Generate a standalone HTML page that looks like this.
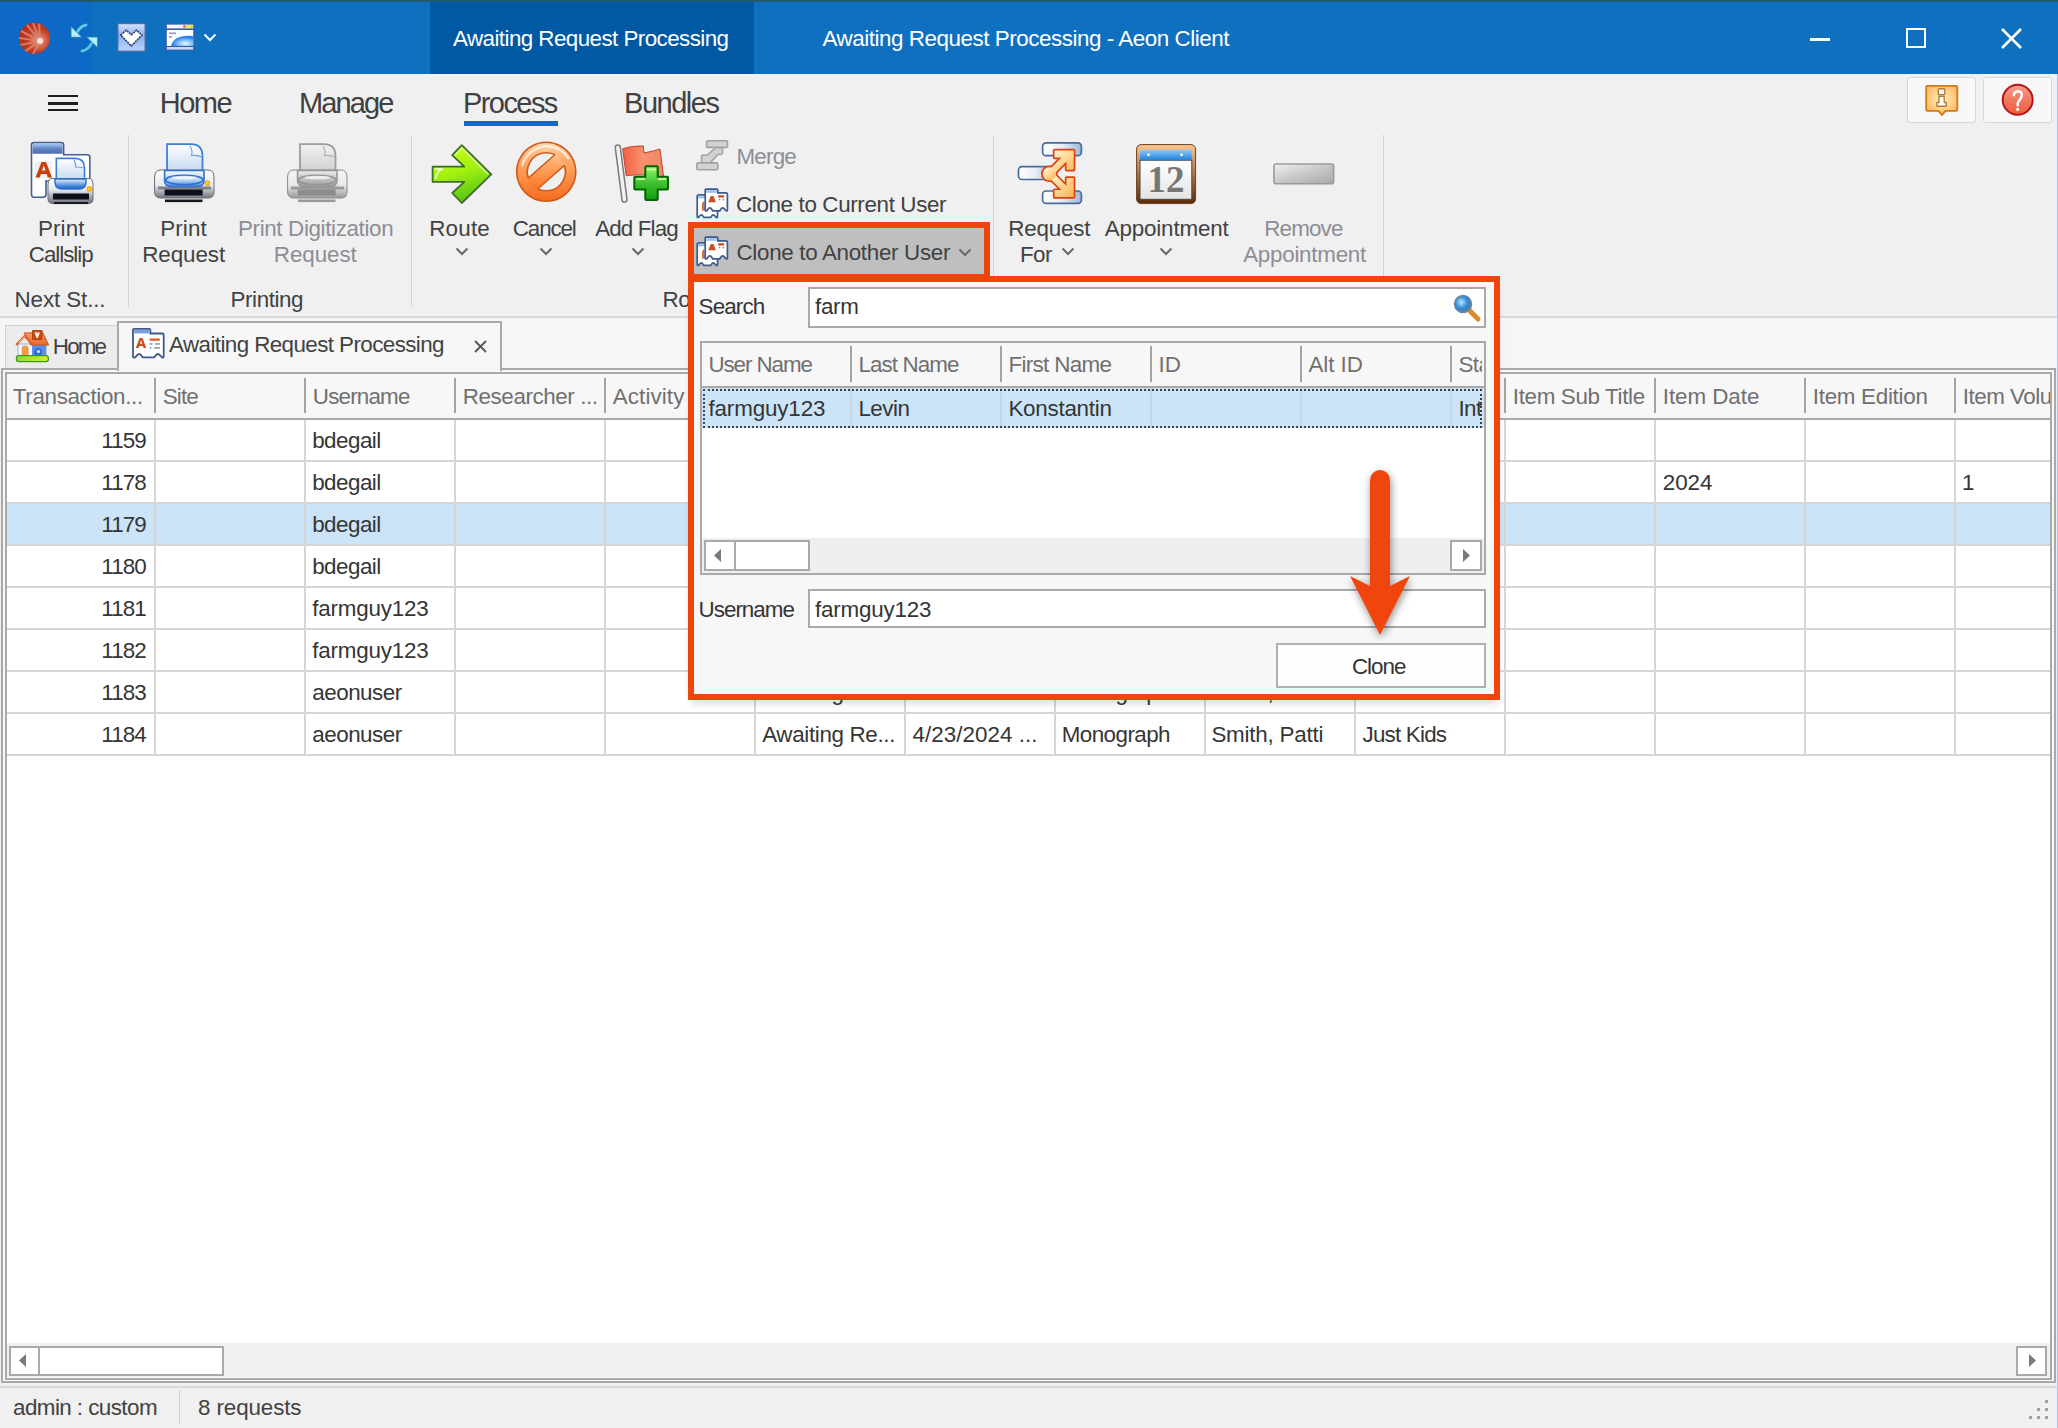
<!DOCTYPE html><html><head><meta charset="utf-8"><title>Aeon Client</title><style>*{margin:0;padding:0}
html,body{width:2058px;height:1428px;overflow:hidden;background:#f0f0f0;font-family:"Liberation Sans",sans-serif}
.a{position:absolute}
.t{position:absolute;white-space:nowrap;line-height:1}
svg{overflow:visible}
</style></head><body><div class="a" style="left:0px;top:0px;width:2058px;height:74px;background:#1070c0"></div>
<div class="a" style="left:0px;top:0px;width:92px;height:74px;background:#0e69c6"></div>
<div class="a" style="left:0px;top:0px;width:2058px;height:2px;background:#1f5a6e"></div>
<div class="a" style="left:430px;top:2px;width:324px;height:72px;background:#0259a3"></div>
<div class="t" style="left:453.0px;top:28.34px;font-size:22.4px;color:#ffffff;letter-spacing:-0.568px;">Awaiting Request Processing</div>
<div class="t" style="left:822.5px;top:28.34px;font-size:22.4px;color:#ffffff;letter-spacing:-0.455px;">Awaiting Request Processing - Aeon Client</div>
<div class="a" style="left:1810px;top:37.5px;width:20px;height:3px;background:#fff"></div>
<div class="a" style="left:1906px;top:28px;width:20px;height:20px;border:2.5px solid #fff;box-sizing:border-box"></div>
<svg class="a" style="left:2001px;top:28px" width="21" height="21" viewBox="0 0 21 21"><path d="M1 1L20 20M20 1L1 20" stroke="#fff" stroke-width="2.6"/></svg>
<svg class="a" style="left:18px;top:22px" width="33" height="33" viewBox="0 0 33 33"><defs><radialGradient id="rs" cx="0.66" cy="0.58" r="0.75"><stop offset="0" stop-color="#fff0ea"/><stop offset="0.18" stop-color="#e07a62"/><stop offset="0.5" stop-color="#bf3a1e"/><stop offset="1" stop-color="#b02e14"/></radialGradient>
<clipPath id="rsc"><circle cx="16.5" cy="16.3" r="15.5"/></clipPath></defs>
<circle cx="16.5" cy="16.3" r="15.5" fill="url(#rs)"/>
<g clip-path="url(#rsc)" stroke="#d98472" stroke-width="2.2" opacity="0.85" fill="none">
<path d="M22 19L9 3M22 19L15 1M22 19L21 0M22 19L3 9M22 19L1 16M22 19L2 23M22 19L6 30M22 19L14 34"/></g>
<circle cx="22" cy="19" r="3" fill="#fbeae4" opacity="0.9"/></svg>
<svg class="a" style="left:69px;top:24px" width="31" height="29" viewBox="0 0 31 29"><g fill="none" stroke-linecap="round"><path d="M8 8.5Q11.5 2 17 1" stroke="#0f7fae" stroke-width="4.2"/><path d="M8 8.5Q11.5 2 17 1" stroke="#6ccaf6" stroke-width="2.6"/>
<path d="M23 18.5Q19.5 26 13 27" stroke="#0f7fae" stroke-width="4.2"/><path d="M23 18.5Q19.5 26 13 27" stroke="#5cc2f2" stroke-width="2.6"/></g>
<path d="M2 13.3V2.4L12.9 13.3Z" fill="#b8ecff" stroke="#0f7fae" stroke-width="0.8"/>
<path d="M28.6 13H17.4L28.6 23.7Z" fill="#b8ecff" stroke="#0f7fae" stroke-width="0.8"/></svg>
<svg class="a" style="left:117px;top:23px" width="29" height="29" viewBox="0 0 29 29"><defs><linearGradient id="hb" x1="0" y1="0" x2="0" y2="1"><stop offset="0" stop-color="#d4e4ff"/><stop offset="0.45" stop-color="#8cb0f2"/><stop offset="1" stop-color="#bcd6fe"/></linearGradient></defs>
<rect x="0.8" y="0.5" width="27.4" height="27.8" fill="url(#hb)" stroke="#56689c" stroke-width="1.4"/>
<path d="M3.6 12.1L9.3 7.2L14.3 11.8L19.5 7.2L25 12.1L14.3 23Z" fill="#fff" stroke="#2a3f7a" stroke-width="1.6" stroke-dasharray="2 0.8" stroke-linejoin="round"/></svg>
<svg class="a" style="left:165px;top:23px" width="30" height="28" viewBox="0 0 30 28"><defs><radialGradient id="gl" cx="0.65" cy="0.75" r="0.6"><stop offset="0" stop-color="#e8f4ff"/><stop offset="0.6" stop-color="#7ab8f8"/><stop offset="1" stop-color="#2a80e8"/></radialGradient></defs>
<rect x="0.6" y="0.6" width="28.8" height="26.8" fill="#3a5aa0"/>
<rect x="1.8" y="1.6" width="26.4" height="3.8" fill="#f0f6ff"/>
<circle cx="19.5" cy="3.5" r="1.6" fill="#f07060"/><circle cx="23" cy="3.5" r="1.6" fill="#f0e020"/><circle cx="26.5" cy="3.5" r="1.6" fill="#c8e020"/>
<rect x="1.8" y="7" width="26.4" height="16" fill="#ffffff"/>
<rect x="4" y="9.5" width="7" height="1.6" fill="#8a9ac0"/><rect x="4" y="13" width="3" height="1.6" fill="#8a9ac0"/>
<path d="M6 23C8 15 16 11.5 28.2 13V23Z" fill="url(#gl)"/>
<rect x="1.8" y="24" width="26.4" height="2.6" fill="#c8d8fc"/></svg>
<svg class="a" style="left:203px;top:33px" width="14" height="9" viewBox="0 0 14 9"><path d="M1.5 1.5L7 7L12.5 1.5" fill="none" stroke="#fff" stroke-width="2"/></svg>
<div class="a" style="left:0px;top:74px;width:2058px;height:243px;background:#f0f0f0"></div>
<div class="a" style="left:48px;top:94.5px;width:30px;height:2.6px;background:#1e1e1e"></div>
<div class="a" style="left:48px;top:102px;width:30px;height:2.6px;background:#1e1e1e"></div>
<div class="a" style="left:48px;top:108.5px;width:30px;height:2.6px;background:#1e1e1e"></div>
<div class="t" style="left:159.7px;top:88.75px;font-size:29px;color:#404040;letter-spacing:-1.443px;">Home</div>
<div class="t" style="left:299.0px;top:88.75px;font-size:29px;color:#404040;letter-spacing:-1.876px;">Manage</div>
<div class="t" style="left:463.0px;top:88.75px;font-size:29px;color:#404040;letter-spacing:-1.573px;">Process</div>
<div class="t" style="left:624.0px;top:88.75px;font-size:29px;color:#404040;letter-spacing:-1.464px;">Bundles</div>
<div class="a" style="left:464px;top:121px;width:94px;height:5px;background:#1068c0"></div>
<div class="a" style="left:1907px;top:77px;width:69px;height:46px;background:#f8f8f8;border:1.5px solid #d8d8d8;box-sizing:border-box;border-radius:3px"></div>
<div class="a" style="left:1983px;top:77px;width:69px;height:46px;background:#f8f8f8;border:1.5px solid #d8d8d8;box-sizing:border-box;border-radius:3px"></div>
<svg class="a" style="left:1925px;top:84px" width="34" height="33" viewBox="0 0 34 33"><defs><radialGradient id="al" cx="0.5" cy="0.45" r="0.7"><stop offset="0" stop-color="#fff0c0"/><stop offset="0.5" stop-color="#ffd088"/><stop offset="1" stop-color="#f8b050"/></radialGradient></defs>
<path d="M2.2 1.8Q1.2 1.8 1.2 2.8V25.5Q1.2 26.8 2.5 26.8H13.5L17 31L20.5 26.8H31Q32.3 26.8 32.3 25.5V2.8Q32.3 1.8 31.3 1.8Z" fill="url(#al)" stroke="#cf7a12" stroke-width="1.8" stroke-linejoin="round"/>
<rect x="13.3" y="4.8" width="6.5" height="5.8" rx="0.8" fill="#fff" stroke="#b87838" stroke-width="1.4"/>
<path d="M14 12.2H19.2V18.5H21.3V22.3H12V18.5H14Z" fill="#fff" stroke="#b87838" stroke-width="1.4" stroke-linejoin="round"/></svg>
<svg class="a" style="left:2001px;top:84px" width="34" height="33" viewBox="0 0 34 33"><defs><linearGradient id="hp" x1="0" y1="0" x2="0" y2="1"><stop offset="0" stop-color="#f8a090"/><stop offset="0.5" stop-color="#f07860"/><stop offset="1" stop-color="#f05a38"/></linearGradient></defs>
<circle cx="16.7" cy="15.8" r="15" fill="url(#hp)" stroke="#b01818" stroke-width="2"/>
<path d="M12.8 11.3Q13.5 7.3 17 7.3Q21 7.5 20.8 11.3Q20.5 14.5 17.8 17Q16.5 18.5 16.7 21.5" fill="none" stroke="#fff" stroke-width="2.4" stroke-linecap="round"/><circle cx="16.7" cy="25.3" r="1.6" fill="#fff"/></svg>
<div class="a" style="left:127.5px;top:135px;width:1.5px;height:172px;background:#d3d3d3"></div>
<div class="a" style="left:410.5px;top:135px;width:1.5px;height:172px;background:#d3d3d3"></div>
<div class="a" style="left:992.5px;top:135px;width:1.5px;height:172px;background:#d3d3d3"></div>
<div class="a" style="left:1382.5px;top:135px;width:1.5px;height:172px;background:#d3d3d3"></div>
<div class="a" style="left:0px;top:316px;width:2058px;height:2px;background:#d8d8d8"></div>
<div class="t" style="left:14.5px;top:289.04px;font-size:22.4px;color:#424242;letter-spacing:-0.112px;">Next St...</div>
<div class="t" style="left:230.5px;top:289.04px;font-size:22.4px;color:#424242;letter-spacing:-0.408px;">Printing</div>
<div class="t" style="left:662.5px;top:289.04px;font-size:22.4px;color:#424242;letter-spacing:-0.500px;">Ro</div>
<div class="t" style="left:-338.73px;width:800px;text-align:center;top:218.04px;font-size:22.4px;color:#424242;letter-spacing:0.130px;">Print</div>
<div class="t" style="left:-339.32px;width:800px;text-align:center;top:243.54px;font-size:22.4px;color:#424242;letter-spacing:-1.043px;">Callslip</div>
<div class="t" style="left:-216.43px;width:800px;text-align:center;top:218.04px;font-size:22.4px;color:#424242;letter-spacing:0.130px;">Print</div>
<div class="t" style="left:-216.33px;width:800px;text-align:center;top:243.54px;font-size:22.4px;color:#424242;letter-spacing:-0.056px;">Request</div>
<div class="t" style="left:-84.38px;width:800px;text-align:center;top:218.04px;font-size:22.4px;color:#8d8d96;letter-spacing:-0.365px;">Print Digitization</div>
<div class="t" style="left:-84.73px;width:800px;text-align:center;top:243.54px;font-size:22.4px;color:#8d8d96;letter-spacing:-0.056px;">Request</div>
<div class="t" style="left:59.60px;width:800px;text-align:center;top:218.04px;font-size:22.4px;color:#424242;letter-spacing:0.204px;">Route</div>
<div class="t" style="left:144.24px;width:800px;text-align:center;top:218.04px;font-size:22.4px;color:#424242;letter-spacing:-1.127px;">Cancel</div>
<div class="t" style="left:236.57px;width:800px;text-align:center;top:218.04px;font-size:22.4px;color:#424242;letter-spacing:-0.865px;">Add Flag</div>
<div class="t" style="left:649.20px;width:800px;text-align:center;top:218.04px;font-size:22.4px;color:#424242;letter-spacing:-0.206px;">Request</div>
<div class="t" style="left:1019.9px;top:243.54px;font-size:22.4px;color:#424242;letter-spacing:-0.513px;">For</div>
<div class="t" style="left:766.62px;width:800px;text-align:center;top:218.04px;font-size:22.4px;color:#424242;letter-spacing:-0.165px;">Appointment</div>
<div class="t" style="left:903.38px;width:800px;text-align:center;top:218.04px;font-size:22.4px;color:#8d8d96;letter-spacing:-0.841px;">Remove</div>
<div class="t" style="left:904.57px;width:800px;text-align:center;top:243.54px;font-size:22.4px;color:#8d8d96;letter-spacing:-0.265px;">Appointment</div>
<svg class="a" style="left:455px;top:247px" width="14" height="9" viewBox="0 0 14 9"><path d="M1.5 1.5L7 7L12.5 1.5" fill="none" stroke="#6a6a6a" stroke-width="2"/></svg>
<svg class="a" style="left:539px;top:247px" width="14" height="9" viewBox="0 0 14 9"><path d="M1.5 1.5L7 7L12.5 1.5" fill="none" stroke="#6a6a6a" stroke-width="2"/></svg>
<svg class="a" style="left:631px;top:247px" width="14" height="9" viewBox="0 0 14 9"><path d="M1.5 1.5L7 7L12.5 1.5" fill="none" stroke="#6a6a6a" stroke-width="2"/></svg>
<svg class="a" style="left:1061px;top:247px" width="14" height="9" viewBox="0 0 14 9"><path d="M1.5 1.5L7 7L12.5 1.5" fill="none" stroke="#6a6a6a" stroke-width="2"/></svg>
<svg class="a" style="left:1159px;top:247px" width="14" height="9" viewBox="0 0 14 9"><path d="M1.5 1.5L7 7L12.5 1.5" fill="none" stroke="#6a6a6a" stroke-width="2"/></svg>
<div class="t" style="left:736.4px;top:146.34px;font-size:22.4px;color:#8d8d96;letter-spacing:-0.775px;">Merge</div>
<div class="t" style="left:736.0px;top:194.04px;font-size:22.4px;color:#424242;letter-spacing:-0.361px;">Clone to Current User</div>
<svg class="a" style="left:30px;top:141px" width="64" height="64" viewBox="0 0 64 64"><defs><linearGradient id="tabg" x1="0" y1="0" x2="0" y2="1"><stop offset="0" stop-color="#a8c8f8"/><stop offset="0.5" stop-color="#5f86c0"/><stop offset="1" stop-color="#4a6ea8"/></linearGradient>
<linearGradient id="bodyg" x1="0" y1="0" x2="0" y2="1"><stop offset="0" stop-color="#ffffff"/><stop offset="0.45" stop-color="#e9ebee"/><stop offset="0.7" stop-color="#a9adb4"/><stop offset="1" stop-color="#6d7178"/></linearGradient>
<linearGradient id="papg" x1="0" y1="0" x2="0" y2="1"><stop offset="0" stop-color="#ffffff"/><stop offset="1" stop-color="#c8dcf4"/></linearGradient>
<linearGradient id="trayg" x1="0" y1="0" x2="0" y2="1"><stop offset="0" stop-color="#e8f2ff"/><stop offset="0.6" stop-color="#5a98e0"/><stop offset="1" stop-color="#1f5cc0"/></linearGradient></defs>
<path d="M1.5 4Q1.5 1.6 4 1.6H31Q33.6 1.6 33.6 4V13.8H57.5Q59.8 13.8 59.8 16V40H16V53Q16 56.3 13 56.3H4Q1.5 56.3 1.5 53Z" fill="#ffffff" stroke="#44618e" stroke-width="1.6"/>
<path d="M2.5 4Q2.5 2.6 4 2.6H31Q32.6 2.6 32.6 4V12.8H2.5Z" fill="url(#tabg)"/>
<rect x="5" y="20" width="17" height="17" fill="#eef0f3"/>
<path d="M5.5 36.5L11.5 21H16L22 36.5H17.8L16.6 33H10.9L9.7 36.5ZM12 29.6H15.5L13.8 24.4Z" fill="#c8400c"/>
<path d="M26.3 17.4H45Q54.5 17.4 54.5 27V38H26.3Z" fill="url(#papg)" stroke="#3d80d8" stroke-width="1.6"/>
<path d="M44 18.5Q46 23 45.5 26Q50 26 53.5 27" fill="none" stroke="#6aa0e0" stroke-width="1.2"/>
<path d="M18 44Q18 37.5 22 37.5H59Q63 37.5 63 44V58Q63 62.6 58 62.6H23Q18 62.6 18 58Z" fill="url(#bodyg)" stroke="#6a6e74" stroke-width="1"/>
<path d="M25 38H56Q57 47 50 48H31Q24 47 25 38Z" fill="url(#trayg)" stroke="#2f70d0" stroke-width="1.5"/>
<rect x="23" y="52.5" width="36" height="6" fill="#0d0f1a"/>
<rect x="24" y="61" width="34" height="2" fill="#14161e"/>
<circle cx="59.3" cy="48" r="2.4" fill="#ffd200" stroke="#f08020" stroke-width="0.8"/></svg>
<svg class="a" style="left:153px;top:143px" width="62" height="60" viewBox="0 0 62 60"><defs><linearGradient id="pba" x1="0" y1="0" x2="0" y2="1"><stop offset="0" stop-color="#ffffff"/><stop offset="0.55" stop-color="#e6e8eb"/><stop offset="1" stop-color="#73777e"/></linearGradient>
<linearGradient id="ppa" x1="0" y1="0" x2="0" y2="1"><stop offset="0" stop-color="#ffffff"/><stop offset="1" stop-color="#c4d8f2"/></linearGradient>
<linearGradient id="pta" x1="0" y1="0" x2="0" y2="1"><stop offset="0" stop-color="#f4f9ff"/><stop offset="0.6" stop-color="#b8d6f6"/><stop offset="1" stop-color="#4a88e0"/></linearGradient></defs>
<path d="M14 1.2H38Q49.5 1.2 49.5 13V29H14Z" fill="url(#ppa)" stroke="#3d80d8" stroke-width="1.8"/>
<path d="M37 3Q40 8 38.5 12.5Q45 12 48.5 14" fill="none" stroke="#3d80d8" stroke-width="1.2" opacity="0.7"/>
<path d="M1.6 34Q1.6 27 8 27H55Q61 27 61 34V49Q61 55 55 55H8Q1.6 55 1.6 49Z" fill="url(#pba)" stroke="#6a6e74" stroke-width="1"/>
<rect x="5" y="43.5" width="53" height="3" fill="#6a6e74" opacity="0.8"/>
<path d="M11.6 27.5H51V37.5Q51 43.5 44 43.5H19Q11.6 43.5 11.6 37.5Z" fill="url(#pta)" stroke="#2f70d0" stroke-width="1.6"/>
<ellipse cx="31.3" cy="37" rx="18.5" ry="4.6" fill="none" stroke="#2f70d0" stroke-width="1.8"/>
<ellipse cx="31.3" cy="34.5" rx="13" ry="1.8" fill="#ffffff" opacity="0.7"/>
<rect x="11.6" y="46.5" width="38" height="6" fill="#0d0f1a"/>
<rect x="12" y="56.5" width="37.5" height="2.6" fill="#14161e"/><circle cx="54.3" cy="40.2" r="2.4" fill="#ffd200" stroke="#f08020" stroke-width="0.8"/></svg>
<svg class="a" style="left:286px;top:143px" width="62" height="60" viewBox="0 0 62 60"><defs><linearGradient id="pbb" x1="0" y1="0" x2="0" y2="1"><stop offset="0" stop-color="#f4f4f4"/><stop offset="0.55" stop-color="#e6e8eb"/><stop offset="1" stop-color="#9a9a9a"/></linearGradient>
<linearGradient id="ppb" x1="0" y1="0" x2="0" y2="1"><stop offset="0" stop-color="#f2f2f2"/><stop offset="1" stop-color="#cfcfcf"/></linearGradient>
<linearGradient id="ptb" x1="0" y1="0" x2="0" y2="1"><stop offset="0" stop-color="#eeeeee"/><stop offset="0.6" stop-color="#bdbdbd"/><stop offset="1" stop-color="#9a9a9a"/></linearGradient></defs>
<path d="M14 1.2H38Q49.5 1.2 49.5 13V29H14Z" fill="url(#ppb)" stroke="#9c9c9c" stroke-width="1.8"/>
<path d="M37 3Q40 8 38.5 12.5Q45 12 48.5 14" fill="none" stroke="#9c9c9c" stroke-width="1.2" opacity="0.7"/>
<path d="M1.6 34Q1.6 27 8 27H55Q61 27 61 34V49Q61 55 55 55H8Q1.6 55 1.6 49Z" fill="url(#pbb)" stroke="#8a8a8a" stroke-width="1"/>
<rect x="5" y="43.5" width="53" height="3" fill="#8a8a8a" opacity="0.8"/>
<path d="M11.6 27.5H51V37.5Q51 43.5 44 43.5H19Q11.6 43.5 11.6 37.5Z" fill="url(#ptb)" stroke="#969696" stroke-width="1.6"/>
<ellipse cx="31.3" cy="37" rx="18.5" ry="4.6" fill="none" stroke="#969696" stroke-width="1.8"/>
<ellipse cx="31.3" cy="34.5" rx="13" ry="1.8" fill="#ffffff" opacity="0.7"/>
<rect x="11.6" y="46.5" width="38" height="6" fill="#8c8c8c"/>
<rect x="12" y="56.5" width="37.5" height="2.6" fill="#9a9a9a"/></svg>
<svg class="a" style="left:431px;top:144px" width="62" height="61" viewBox="0 0 62 61"><defs><linearGradient id="gr" x1="0" y1="0" x2="0.3" y2="1"><stop offset="0" stop-color="#c8ff10"/><stop offset="0.55" stop-color="#a2f010"/><stop offset="1" stop-color="#5cc816"/></linearGradient></defs>
<path d="M1.6 22.7H33.3L21.2 11.1L30.8 1.1L60.3 30.3L30.8 59L21.2 49L33.3 37.9H1.6Z" fill="url(#gr)" stroke="#3d6e2a" stroke-width="1.8" stroke-linejoin="round"/>
<path d="M3.5 25H12Q6 26 4.5 35" fill="none" stroke="#f4ffd8" stroke-width="1.5"/>
<path d="M24 11.2L30.8 4L57 30.3" fill="none" stroke="#eaffc0" stroke-width="1.4" opacity="0.8"/></svg>
<svg class="a" style="left:515px;top:142px" width="63" height="62" viewBox="0 0 63 62"><defs><linearGradient id="cg" x1="0" y1="0" x2="0" y2="1"><stop offset="0" stop-color="#ffd8b0"/><stop offset="0.3" stop-color="#ffac68"/><stop offset="1" stop-color="#f66a1c"/></linearGradient>
<clipPath id="cclip"><circle cx="31.3" cy="29.8" r="20"/></clipPath><clipPath id="cclip2"><circle cx="31.3" cy="29.8" r="19"/></clipPath></defs>
<path fill-rule="evenodd" d="M31.3 0.3A29.5 29.5 0 1 1 31.2 0.3ZM31.3 10.8A19 19 0 1 0 31.4 10.8Z" fill="url(#cg)" stroke="#cf5a1e" stroke-width="1.6"/>
<path d="M54.8 18.7L45.3 7.9L7.8 40.9L17.3 51.7Z" fill="url(#cg)" clip-path="url(#cclip)"/>
<g clip-path="url(#cclip2)" stroke="#cf5a1e" stroke-width="1.4"><path d="M45.3 7.9L7.8 40.9M54.8 18.7L17.3 51.7"/></g>
<path d="M7 24Q12 7 31 4Q47 5 54 17" fill="none" stroke="#ffffff" stroke-width="2.2" opacity="0.7"/></svg>
<svg class="a" style="left:612px;top:144px" width="58" height="60" viewBox="0 0 58 60"><defs><linearGradient id="fl" x1="0" y1="0" x2="1" y2="0"><stop offset="0" stop-color="#f06040"/><stop offset="0.5" stop-color="#f89070"/><stop offset="1" stop-color="#f08868"/></linearGradient>
<linearGradient id="pl" x1="0" y1="0" x2="0" y2="1"><stop offset="0" stop-color="#90ff70"/><stop offset="0.5" stop-color="#40c030"/><stop offset="1" stop-color="#10a010"/></linearGradient></defs>
<path d="M5.8 3.5L12.5 55.5" stroke="#7a7a7a" stroke-width="6.5" stroke-linecap="round"/>
<path d="M5.8 3.5L12.5 55.5" stroke="#f2f2f2" stroke-width="3.5" stroke-linecap="round"/>
<path d="M10.7 4.8C17 2.5 24 2 31.3 2L32 8.8C38 8 43 6.5 48 5L51.5 32.3C45 33 40 34 35.5 35L34.5 31C27 30.5 20 31 14.2 31.8Z" fill="url(#fl)" stroke="#c04030" stroke-width="1"/>
<path d="M33.3 23.3Q33.3 22.3 34.3 22.3H44.7Q45.7 22.3 45.7 23.3V32.8H55Q56 32.8 56 33.8V44.5Q56 45.5 55 45.5H45.7V55Q45.7 56 44.7 56H34.3Q33.3 56 33.3 55V45.5H23.3Q22.3 45.5 22.3 44.5V33.8Q22.3 32.8 23.3 32.8H33.3Z" fill="url(#pl)" stroke="#006400" stroke-width="2"/>
<path d="M35 25.5H44M24.5 35H33M46 35H54" stroke="#e8ffb0" stroke-width="1.5"/></svg>
<svg class="a" style="left:696px;top:140px" width="33" height="31" viewBox="0 0 33 31"><g fill="#d2d2d2" stroke="#a2a2a2" stroke-width="1.6" stroke-linejoin="round">
<path d="M5.5 23V16.5Q5.5 15 7 15H11.5L20 7.4H26.5V12.5Q26.5 14.5 24.5 14.5H22L14 22.9Z"/>
<rect x="10.5" y="0.8" width="21" height="6.6" rx="1.2"/><rect x="0.8" y="22.9" width="21" height="6.8" rx="1.2"/></g></svg>
<svg class="a" style="left:696px;top:188px" width="33" height="31" viewBox="0 0 33 31"><path d="M1.2 8.6Q1.2 6.8 3 6.8H21.5V28.6Q21.3 30 20 29.3L19.2 28.4Q17.3 25.2 15.4 28.4L14.8 29.3H7.8L7.2 28.4Q5.3 25.2 3.4 28.4L2.6 29.3Q1.2 30 1.2 28.5Z" fill="#ffffff" stroke="#3f5a8a" stroke-width="1.7"/>
<rect x="2.3" y="7.8" width="8" height="2.6" fill="#9cc0f4"/>
<path d="M6 15L8 13L9 22L6 23Z" fill="#d0622a" opacity="0.9"/>
<path d="M9.2 22.2V2Q9.2 1.1 10.1 1.1H20.8Q21.8 1.1 21.8 2V4.8H29.9Q31.4 4.8 31.4 6.3V22Q31.2 23.4 30 22.8L29.1 21.8Q26.6 17.8 24.4 21.8L23.8 22.8H16.7L16.1 21.8Q13.7 17.8 11.5 21.8L10.7 22.8Q9.2 23.4 9.2 22.2Z" fill="#ffffff" stroke="#3f5a8a" stroke-width="1.7"/>
<rect x="10.3" y="2.2" width="10.4" height="2.6" fill="#9cc0f4"/>
<path d="M12.3 14.2L14.8 8H17.4L19.9 14.2Z" fill="#c8501e"/>
<rect x="22" y="7.2" width="6.3" height="2.4" rx="1.2" fill="#d04a10"/>
<circle cx="23.6" cy="11.5" r="0.9" fill="#8a9ab0"/><circle cx="27.4" cy="11.5" r="0.9" fill="#8a9ab0"/></svg>
<svg class="a" style="left:1017px;top:142px" width="66" height="63" viewBox="0 0 66 63"><defs><linearGradient id="bar" x1="0" y1="0" x2="1" y2="0"><stop offset="0" stop-color="#ffffff"/><stop offset="0.5" stop-color="#e8eef6"/><stop offset="1" stop-color="#9ab8d8"/></linearGradient>
<linearGradient id="org" x1="0" y1="0" x2="1" y2="1"><stop offset="0" stop-color="#fffde0"/><stop offset="1" stop-color="#ffb050"/></linearGradient></defs>
<g fill="url(#bar)" stroke="#4a6a98" stroke-width="1.7"><rect x="25.6" y="0.9" width="38.8" height="12.8" rx="3.5"/><rect x="1.5" y="24.6" width="34" height="12.9" rx="3.5"/><rect x="25.6" y="49" width="38.8" height="12.4" rx="3.5"/></g>
<g id="rfa" fill="url(#org)" stroke="#e0400c" stroke-width="3.4" stroke-linejoin="round">
<path d="M37.5 8.5H56.7V27.7H49.5V19.5L36 33L31.5 28.5L44.5 15.5H37.5Z"/>
<path d="M37.5 55.1H56.7V35.9H49.5V44.1L36 30.6L31.5 35.1L44.5 48.1H37.5Z"/>
<circle cx="32.3" cy="31.8" r="6.6"/></g>
<g fill="url(#org)">
<path d="M37.5 8.5H56.7V27.7H49.5V19.5L36 33L31.5 28.5L44.5 15.5H37.5Z"/>
<path d="M37.5 55.1H56.7V35.9H49.5V44.1L36 30.6L31.5 35.1L44.5 48.1H37.5Z"/>
<circle cx="32.3" cy="31.8" r="6.6"/></g></svg>
<svg class="a" style="left:1136px;top:144px" width="61" height="61" viewBox="0 0 61 61"><defs><linearGradient id="cal" x1="0" y1="0" x2="0" y2="1"><stop offset="0" stop-color="#f8c890"/><stop offset="0.5" stop-color="#b07840"/><stop offset="1" stop-color="#5a2a08"/></linearGradient>
<linearGradient id="calb" x1="0" y1="0" x2="0" y2="1"><stop offset="0" stop-color="#8ac8ff"/><stop offset="1" stop-color="#2080d8"/></linearGradient>
<linearGradient id="pg" x1="0" y1="0" x2="0" y2="1"><stop offset="0" stop-color="#ffffff"/><stop offset="1" stop-color="#e4e4e4"/></linearGradient></defs>
<rect x="0.6" y="0.6" width="59" height="59" rx="4.5" fill="url(#cal)" stroke="#6a4020" stroke-width="1"/>
<rect x="4" y="16.2" width="51.8" height="39.1" fill="url(#pg)" stroke="#40464c" stroke-width="1"/>
<rect x="4" y="6.1" width="51.8" height="10.1" rx="1.5" fill="url(#calb)"/>
<circle cx="12.5" cy="10.8" r="1.4" fill="#fff"/><circle cx="45.5" cy="10.8" r="1.4" fill="#fff"/>
<text x="30.1" y="47.7" font-family="Liberation Serif" font-size="37" font-weight="bold" text-anchor="middle" fill="#767676">12</text></svg>
<svg class="a" style="left:1273px;top:163px" width="62" height="22" viewBox="0 0 62 22"><defs><linearGradient id="rb" x1="0" y1="0" x2="1" y2="1"><stop offset="0" stop-color="#f0f0f0"/><stop offset="0.5" stop-color="#c8c8c8"/><stop offset="1" stop-color="#a8a8a8"/></linearGradient></defs>
<rect x="1" y="1" width="59.6" height="19.8" rx="2" fill="url(#rb)" stroke="#9a9a9a" stroke-width="1.6"/></svg>
<div class="a" style="left:0px;top:318px;width:2058px;height:51px;background:#f6f6f6"></div>
<div class="a" style="left:5px;top:325px;width:113px;height:44px;background:#ececec;border:1.5px solid #d2d2d2;border-bottom:none;box-sizing:border-box"></div>
<div class="a" style="left:0.5px;top:367.8px;width:2055.5px;height:1015.2px;border:2px solid #a9a9a9;box-sizing:border-box;background:#f7f7f7"></div>
<div class="a" style="left:117px;top:321px;width:385px;height:49.5px;background:#f7f7f7;border:2px solid #a9a9a9;border-bottom:none;box-sizing:border-box"></div>
<div class="t" style="left:52.8px;top:336.24px;font-size:22.4px;color:#424242;letter-spacing:-1.822px;">Home</div>
<div class="t" style="left:169.0px;top:334.24px;font-size:22.4px;color:#424242;letter-spacing:-0.587px;">Awaiting Request Processing</div>
<svg class="a" style="left:474px;top:340px" width="13" height="13" viewBox="0 0 13 13"><path d="M1 1L12 12M12 1L1 12" stroke="#555" stroke-width="1.8"/></svg>
<svg class="a" style="left:15px;top:329px" width="34" height="34" viewBox="0 0 34 34"><defs><linearGradient id="gras" x1="0" y1="0" x2="1" y2="0"><stop offset="0" stop-color="#8ad83a"/><stop offset="1" stop-color="#d8f020"/></linearGradient>
<linearGradient id="roof" x1="0" y1="0" x2="0" y2="1"><stop offset="0" stop-color="#f8a060"/><stop offset="1" stop-color="#e86a2a"/></linearGradient></defs>
<rect x="3" y="15" width="14.5" height="12.5" fill="#f4f8ff" stroke="#8aa0c8" stroke-width="0.8"/>
<rect x="7.4" y="17.2" width="5.6" height="10" rx="1.5" fill="#f4a040" stroke="#e07a20" stroke-width="0.8"/>
<rect x="17" y="16" width="14.3" height="11.5" fill="#5a90e8"/>
<circle cx="23" cy="23" r="4" fill="#2a6af0"/><circle cx="23.5" cy="22.5" r="1.6" fill="#d8f4ff"/>
<path d="M9.5 4L27.5 3.5L33.5 16H16Z" fill="url(#roof)" stroke="#d0581a" stroke-width="1.2" stroke-linejoin="round"/>
<path d="M1.2 16L9.8 7L18 16" fill="none" stroke="#e0602a" stroke-width="2.4" stroke-linejoin="round"/>
<path d="M3.5 14L9.8 7.5" stroke="#ffe0a0" stroke-width="1"/>
<rect x="17.6" y="1.4" width="9.4" height="9" fill="#c84a14" stroke="#a83a10" stroke-width="0.8"/><path d="M19.5 3.4H25L22.8 9H21.7Z" fill="#fff4e8"/>
<path d="M1.5 29Q1.5 26.7 3.8 26.7H31Q33.3 26.7 33.3 29V30.5Q33.3 32.6 31 32.6H3.8Q1.5 32.6 1.5 30.5Z" fill="url(#gras)" stroke="#3a9a1a" stroke-width="1.3"/></svg>
<svg class="a" style="left:132px;top:328px" width="33" height="31" viewBox="0 0 33 31"><path d="M1 29V2Q1 0.8 2.2 0.8H17.2Q18.4 0.8 18.4 2V5.5H30.5Q31.7 5.5 31.7 6.7V28.5Q31.5 30 30.2 29.4L29 28.2Q25.8 23.8 23 28.2L22.2 29.4H10.8L10 28.2Q7.2 23.8 4.2 28.2L3.2 29.4Q1 30 1 29Z" fill="#ffffff" stroke="#3f5a8a" stroke-width="1.8"/>
<rect x="2.2" y="2" width="15" height="3.4" fill="#7aa0d8"/>
<path d="M3.8 20L7.6 10H10.5L14.3 20H11.6L10.9 18H7.3L6.6 20ZM7.9 15.8H10.3L9.1 12.3Z" fill="#c8501e"/>
<rect x="17.5" y="10.5" width="10.5" height="2.2" rx="1" fill="#e05a20"/>
<rect x="17.5" y="15" width="3" height="1.8" fill="#9aa8bc"/><rect x="23" y="15" width="5" height="1.8" fill="#9aa8bc"/>
<rect x="17.5" y="19" width="1.8" height="1.8" fill="#9aa8bc"/><rect x="22" y="19" width="6" height="1.8" fill="#9aa8bc"/></svg>
<div class="a" style="left:4.5px;top:372px;width:2047px;height:1007.5px;border:2px solid #a9a9a9;box-sizing:border-box;background:#fff"></div>
<div class="a" style="left:6.5px;top:374px;width:2043px;height:44px;background:#f7f7f7"></div>
<div class="a" style="left:6.5px;top:417.5px;width:2043px;height:2.5px;background:#a9a9a9"></div>
<div class="a" style="left:154px;top:378px;width:2px;height:35px;background:#a3a3a3"></div>
<div class="a" style="left:154px;top:420px;width:2px;height:335px;background:#d6d6d6"></div>
<div class="a" style="left:304px;top:378px;width:2px;height:35px;background:#a3a3a3"></div>
<div class="a" style="left:304px;top:420px;width:2px;height:335px;background:#d6d6d6"></div>
<div class="a" style="left:454px;top:378px;width:2px;height:35px;background:#a3a3a3"></div>
<div class="a" style="left:454px;top:420px;width:2px;height:335px;background:#d6d6d6"></div>
<div class="a" style="left:604px;top:378px;width:2px;height:35px;background:#a3a3a3"></div>
<div class="a" style="left:604px;top:420px;width:2px;height:335px;background:#d6d6d6"></div>
<div class="a" style="left:754px;top:378px;width:2px;height:35px;background:#a3a3a3"></div>
<div class="a" style="left:754px;top:420px;width:2px;height:335px;background:#d6d6d6"></div>
<div class="a" style="left:904px;top:378px;width:2px;height:35px;background:#a3a3a3"></div>
<div class="a" style="left:904px;top:420px;width:2px;height:335px;background:#d6d6d6"></div>
<div class="a" style="left:1054px;top:378px;width:2px;height:35px;background:#a3a3a3"></div>
<div class="a" style="left:1054px;top:420px;width:2px;height:335px;background:#d6d6d6"></div>
<div class="a" style="left:1204px;top:378px;width:2px;height:35px;background:#a3a3a3"></div>
<div class="a" style="left:1204px;top:420px;width:2px;height:335px;background:#d6d6d6"></div>
<div class="a" style="left:1354px;top:378px;width:2px;height:35px;background:#a3a3a3"></div>
<div class="a" style="left:1354px;top:420px;width:2px;height:335px;background:#d6d6d6"></div>
<div class="a" style="left:1504px;top:378px;width:2px;height:35px;background:#a3a3a3"></div>
<div class="a" style="left:1504px;top:420px;width:2px;height:335px;background:#d6d6d6"></div>
<div class="a" style="left:1654px;top:378px;width:2px;height:35px;background:#a3a3a3"></div>
<div class="a" style="left:1654px;top:420px;width:2px;height:335px;background:#d6d6d6"></div>
<div class="a" style="left:1804px;top:378px;width:2px;height:35px;background:#a3a3a3"></div>
<div class="a" style="left:1804px;top:420px;width:2px;height:335px;background:#d6d6d6"></div>
<div class="a" style="left:1954px;top:378px;width:2px;height:35px;background:#a3a3a3"></div>
<div class="a" style="left:1954px;top:420px;width:2px;height:335px;background:#d6d6d6"></div>
<div class="a" style="left:6.5px;top:460px;width:2043px;height:2px;background:#d6d6d6"></div>
<div class="a" style="left:6.5px;top:502px;width:2043px;height:2px;background:#d6d6d6"></div>
<div class="a" style="left:6.5px;top:544px;width:2043px;height:2px;background:#d6d6d6"></div>
<div class="a" style="left:6.5px;top:586px;width:2043px;height:2px;background:#d6d6d6"></div>
<div class="a" style="left:6.5px;top:628px;width:2043px;height:2px;background:#d6d6d6"></div>
<div class="a" style="left:6.5px;top:670px;width:2043px;height:2px;background:#d6d6d6"></div>
<div class="a" style="left:6.5px;top:712px;width:2043px;height:2px;background:#d6d6d6"></div>
<div class="a" style="left:6.5px;top:754px;width:2043px;height:2px;background:#d6d6d6"></div>
<div class="a" style="left:6.5px;top:504px;width:2043px;height:40px;background:#cce4f7"></div>
<div class="a" style="left:154px;top:504px;width:2px;height:40px;background:#d6d6d6"></div>
<div class="a" style="left:304px;top:504px;width:2px;height:40px;background:#d6d6d6"></div>
<div class="a" style="left:454px;top:504px;width:2px;height:40px;background:#d6d6d6"></div>
<div class="a" style="left:604px;top:504px;width:2px;height:40px;background:#d6d6d6"></div>
<div class="a" style="left:754px;top:504px;width:2px;height:40px;background:#d6d6d6"></div>
<div class="a" style="left:904px;top:504px;width:2px;height:40px;background:#d6d6d6"></div>
<div class="a" style="left:1054px;top:504px;width:2px;height:40px;background:#d6d6d6"></div>
<div class="a" style="left:1204px;top:504px;width:2px;height:40px;background:#d6d6d6"></div>
<div class="a" style="left:1354px;top:504px;width:2px;height:40px;background:#d6d6d6"></div>
<div class="a" style="left:1504px;top:504px;width:2px;height:40px;background:#d6d6d6"></div>
<div class="a" style="left:1654px;top:504px;width:2px;height:40px;background:#d6d6d6"></div>
<div class="a" style="left:1804px;top:504px;width:2px;height:40px;background:#d6d6d6"></div>
<div class="a" style="left:1954px;top:504px;width:2px;height:40px;background:#d6d6d6"></div>
<div class="a" style="left:6.5px;top:374px;width:2043px;height:44px;overflow:hidden">
<div class="t" style="left:6.300000000000001px;top:12.04px;font-size:22.4px;color:#707070;letter-spacing:-0.343px;">Transaction...</div>
<div class="t" style="left:156.3px;top:12.04px;font-size:22.4px;color:#707070;letter-spacing:-0.875px;">Site</div>
<div class="t" style="left:306.3px;top:12.04px;font-size:22.4px;color:#707070;letter-spacing:-0.818px;">Username</div>
<div class="t" style="left:456.3px;top:12.04px;font-size:22.4px;color:#707070;letter-spacing:-0.420px;">Researcher ...</div>
<div class="t" style="left:606.3px;top:12.04px;font-size:22.4px;color:#707070;letter-spacing:0.092px;">Activity</div>
<div class="t" style="left:756.3px;top:12.04px;font-size:22.4px;color:#707070;letter-spacing:-0.500px;">Status</div>
<div class="t" style="left:906.3px;top:12.04px;font-size:22.4px;color:#707070;letter-spacing:-0.500px;">Transaction Date</div>
<div class="t" style="left:1056.3px;top:12.04px;font-size:22.4px;color:#707070;letter-spacing:-0.500px;">Document Type</div>
<div class="t" style="left:1206.3px;top:12.04px;font-size:22.4px;color:#707070;letter-spacing:-0.500px;">Item Author</div>
<div class="t" style="left:1356.3px;top:12.04px;font-size:22.4px;color:#707070;letter-spacing:-0.500px;">Item Title</div>
<div class="t" style="left:1506.3px;top:12.04px;font-size:22.4px;color:#707070;letter-spacing:-0.349px;">Item Sub Title</div>
<div class="t" style="left:1656.3px;top:12.04px;font-size:22.4px;color:#707070;letter-spacing:-0.064px;">Item Date</div>
<div class="t" style="left:1806.3px;top:12.04px;font-size:22.4px;color:#707070;letter-spacing:-0.288px;">Item Edition</div>
<div class="t" style="left:1956.3px;top:12.04px;font-size:22.4px;color:#707070;letter-spacing:-0.500px;">Item Volume</div>
</div>
<div class="t" style="right:1912.06px;text-align:right;top:429.64px;font-size:22.4px;color:#353535;letter-spacing:-0.863px;">1159</div>
<div class="t" style="left:312.2px;top:429.64px;font-size:22.4px;color:#353535;letter-spacing:-0.525px;">bdegail</div>
<div class="t" style="right:1912.06px;text-align:right;top:471.64px;font-size:22.4px;color:#353535;letter-spacing:-0.863px;">1178</div>
<div class="t" style="left:312.2px;top:471.64px;font-size:22.4px;color:#353535;letter-spacing:-0.525px;">bdegail</div>
<div class="t" style="right:1912.06px;text-align:right;top:513.64px;font-size:22.4px;color:#353535;letter-spacing:-0.863px;">1179</div>
<div class="t" style="left:312.2px;top:513.64px;font-size:22.4px;color:#353535;letter-spacing:-0.525px;">bdegail</div>
<div class="t" style="right:1912.06px;text-align:right;top:555.64px;font-size:22.4px;color:#353535;letter-spacing:-0.863px;">1180</div>
<div class="t" style="left:312.2px;top:555.64px;font-size:22.4px;color:#353535;letter-spacing:-0.525px;">bdegail</div>
<div class="t" style="right:1912.06px;text-align:right;top:597.64px;font-size:22.4px;color:#353535;letter-spacing:-0.863px;">1181</div>
<div class="t" style="left:312.2px;top:597.64px;font-size:22.4px;color:#353535;letter-spacing:-0.187px;">farmguy123</div>
<div class="t" style="right:1912.06px;text-align:right;top:639.64px;font-size:22.4px;color:#353535;letter-spacing:-0.863px;">1182</div>
<div class="t" style="left:312.2px;top:639.64px;font-size:22.4px;color:#353535;letter-spacing:-0.187px;">farmguy123</div>
<div class="t" style="right:1912.06px;text-align:right;top:681.64px;font-size:22.4px;color:#353535;letter-spacing:-0.863px;">1183</div>
<div class="t" style="left:312.2px;top:681.64px;font-size:22.4px;color:#353535;letter-spacing:-0.472px;">aeonuser</div>
<div class="t" style="right:1912.06px;text-align:right;top:723.64px;font-size:22.4px;color:#353535;letter-spacing:-0.863px;">1184</div>
<div class="t" style="left:312.2px;top:723.64px;font-size:22.4px;color:#353535;letter-spacing:-0.472px;">aeonuser</div>
<div class="t" style="left:762.2px;top:681.64px;font-size:22.4px;color:#353535;letter-spacing:-0.351px;">Awaiting Re...</div>
<div class="t" style="left:912.4px;top:681.64px;font-size:22.4px;color:#353535;letter-spacing:0.056px;">4/23/2024 ...</div>
<div class="t" style="left:1061.7px;top:681.64px;font-size:22.4px;color:#353535;letter-spacing:-0.552px;">Monograph</div>
<div class="t" style="left:1211.4px;top:681.64px;font-size:22.4px;color:#353535;letter-spacing:-0.211px;">Smith, Patti</div>
<div class="t" style="left:1362.5px;top:681.64px;font-size:22.4px;color:#353535;letter-spacing:-0.784px;">Just Kids</div>
<div class="t" style="left:762.2px;top:723.64px;font-size:22.4px;color:#353535;letter-spacing:-0.351px;">Awaiting Re...</div>
<div class="t" style="left:912.4px;top:723.64px;font-size:22.4px;color:#353535;letter-spacing:0.056px;">4/23/2024 ...</div>
<div class="t" style="left:1061.7px;top:723.64px;font-size:22.4px;color:#353535;letter-spacing:-0.552px;">Monograph</div>
<div class="t" style="left:1211.4px;top:723.64px;font-size:22.4px;color:#353535;letter-spacing:-0.211px;">Smith, Patti</div>
<div class="t" style="left:1362.5px;top:723.64px;font-size:22.4px;color:#353535;letter-spacing:-0.784px;">Just Kids</div>
<div class="t" style="left:1662.8px;top:471.64px;font-size:22.4px;color:#353535;letter-spacing:-0.082px;">2024</div>
<div class="t" style="left:1962.0px;top:471.64px;font-size:22.4px;color:#353535;letter-spacing:-0.500px;">1</div>
<div class="a" style="left:6.5px;top:1343px;width:2043px;height:34px;background:#f0f0f0"></div>
<div class="a" style="left:9px;top:1346px;width:31px;height:30px;background:#fff;border:2px solid #a9a9a9;box-sizing:border-box"></div>
<div class="a" style="left:38px;top:1346px;width:186px;height:30px;background:#fff;border:2px solid #a9a9a9;box-sizing:border-box"></div>
<svg class="a" style="left:18px;top:1353px" width="10" height="15" viewBox="0 0 10 15"><path d="M8 1V14L1 7.5Z" fill="#7a7a7a"/></svg>
<div class="a" style="left:2016px;top:1346px;width:31px;height:30px;background:#fff;border:2px solid #a9a9a9;box-sizing:border-box"></div>
<svg class="a" style="left:2028px;top:1353px" width="10" height="15" viewBox="0 0 10 15"><path d="M1 1V14L8 7.5Z" fill="#7a7a7a"/></svg>
<div class="a" style="left:0px;top:1383px;width:2058px;height:45px;background:#f0f0f0"></div>
<div class="a" style="left:0px;top:1386px;width:2058px;height:1.5px;background:#d8d8d8"></div>
<div class="a" style="left:178.5px;top:1390px;width:1.5px;height:35px;background:#d0d0d0"></div>
<div class="t" style="left:13.0px;top:1397.04px;font-size:22.4px;color:#424242;letter-spacing:-0.558px;">admin : custom</div>
<div class="t" style="left:198.0px;top:1397.04px;font-size:22.4px;color:#424242;letter-spacing:-0.111px;">8 requests</div>
<div class="a" style="left:2044.5px;top:1399.5px;width:3px;height:3px;background:#a0a0a0"></div>
<div class="a" style="left:2036.5px;top:1407.5px;width:3px;height:3px;background:#a0a0a0"></div>
<div class="a" style="left:2044.5px;top:1407.5px;width:3px;height:3px;background:#a0a0a0"></div>
<div class="a" style="left:2028.5px;top:1415.5px;width:3px;height:3px;background:#a0a0a0"></div>
<div class="a" style="left:2036.5px;top:1415.5px;width:3px;height:3px;background:#a0a0a0"></div>
<div class="a" style="left:2044.5px;top:1415.5px;width:3px;height:3px;background:#a0a0a0"></div>
<div class="a" style="left:2057px;top:74px;width:1px;height:1354px;background:#a8c8ec"></div>
<div class="a" style="left:688px;top:276px;width:812px;height:424px;box-shadow:0 6px 8px -3px rgba(0,0,0,0.16)"></div>
<div class="a" style="left:688px;top:222px;width:302px;height:58px;border:6px solid #f0440a;box-sizing:border-box;background:#bfbfbf"></div>
<svg class="a" style="left:696px;top:236px" width="33" height="31" viewBox="0 0 33 31"><path d="M1.2 8.6Q1.2 6.8 3 6.8H21.5V28.6Q21.3 30 20 29.3L19.2 28.4Q17.3 25.2 15.4 28.4L14.8 29.3H7.8L7.2 28.4Q5.3 25.2 3.4 28.4L2.6 29.3Q1.2 30 1.2 28.5Z" fill="#ffffff" stroke="#3f5a8a" stroke-width="1.7"/>
<rect x="2.3" y="7.8" width="8" height="2.6" fill="#9cc0f4"/>
<path d="M6 15L8 13L9 22L6 23Z" fill="#d0622a" opacity="0.9"/>
<path d="M9.2 22.2V2Q9.2 1.1 10.1 1.1H20.8Q21.8 1.1 21.8 2V4.8H29.9Q31.4 4.8 31.4 6.3V22Q31.2 23.4 30 22.8L29.1 21.8Q26.6 17.8 24.4 21.8L23.8 22.8H16.7L16.1 21.8Q13.7 17.8 11.5 21.8L10.7 22.8Q9.2 23.4 9.2 22.2Z" fill="#ffffff" stroke="#3f5a8a" stroke-width="1.7"/>
<rect x="10.3" y="2.2" width="10.4" height="2.6" fill="#9cc0f4"/>
<path d="M12.3 14.2L14.8 8H17.4L19.9 14.2Z" fill="#c8501e"/>
<rect x="22" y="7.2" width="6.3" height="2.4" rx="1.2" fill="#d04a10"/>
<circle cx="23.6" cy="11.5" r="0.9" fill="#8a9ab0"/><circle cx="27.4" cy="11.5" r="0.9" fill="#8a9ab0"/></svg>
<div class="t" style="left:736.5px;top:242.04px;font-size:22.4px;color:#424242;letter-spacing:-0.322px;">Clone to Another User</div>
<svg class="a" style="left:958px;top:248px" width="14" height="9" viewBox="0 0 14 9"><path d="M1.5 1.5L7 7L12.5 1.5" fill="none" stroke="#6a6a6a" stroke-width="2"/></svg>
<div class="a" style="left:688px;top:276px;width:812px;height:424px;border:6px solid #f0440a;box-sizing:border-box;background:#f7f7f7"></div>
<div class="t" style="left:698.6px;top:295.64px;font-size:22.4px;color:#353535;letter-spacing:-0.877px;">Search</div>
<div class="a" style="left:808px;top:287px;width:678px;height:41px;background:#fff;border:2px solid #a9a9a9;box-sizing:border-box"></div>
<div class="t" style="left:815.0px;top:295.64px;font-size:22.4px;color:#353535;letter-spacing:-0.276px;">farm</div>
<svg class="a" style="left:1453px;top:294px" width="28" height="27" viewBox="0 0 28 27"><defs><radialGradient id="mg" cx="0.4" cy="0.4" r="0.6"><stop offset="0" stop-color="#bfe6ff"/><stop offset="0.6" stop-color="#2d8ad8"/><stop offset="1" stop-color="#5a7a9a"/></radialGradient></defs>
<path d="M15 15L25 25" stroke="#d88a30" stroke-width="5" stroke-linecap="round"/>
<circle cx="10" cy="10" r="8.5" fill="url(#mg)" stroke="#6a88a8" stroke-width="1.5"/></svg>
<div class="a" style="left:700px;top:341px;width:786px;height:234px;background:#fff;border:2px solid #a9a9a9;box-sizing:border-box"></div>
<div class="a" style="left:702px;top:343px;width:782px;height:43px;background:#f7f7f7"></div>
<div class="a" style="left:702px;top:386px;width:782px;height:2px;background:#a9a9a9"></div>
<div class="a" style="left:850px;top:346px;width:2px;height:36px;background:#a3a3a3"></div>
<div class="a" style="left:1000px;top:346px;width:2px;height:36px;background:#a3a3a3"></div>
<div class="a" style="left:1150px;top:346px;width:2px;height:36px;background:#a3a3a3"></div>
<div class="a" style="left:1300px;top:346px;width:2px;height:36px;background:#a3a3a3"></div>
<div class="a" style="left:1450px;top:346px;width:2px;height:36px;background:#a3a3a3"></div>
<div class="a" style="left:702px;top:388px;width:782px;height:40px;background:#cce4f7"></div>
<div class="a" style="left:850px;top:388px;width:2px;height:40px;background:#c8d6e4"></div>
<div class="a" style="left:1000px;top:388px;width:2px;height:40px;background:#c8d6e4"></div>
<div class="a" style="left:1150px;top:388px;width:2px;height:40px;background:#c8d6e4"></div>
<div class="a" style="left:1300px;top:388px;width:2px;height:40px;background:#c8d6e4"></div>
<div class="a" style="left:1450px;top:388px;width:2px;height:40px;background:#c8d6e4"></div>
<div class="a" style="left:703px;top:388.5px;width:779px;height:39px;border:2px dotted #404040;box-sizing:border-box"></div>
<div class="a" style="left:702px;top:343px;width:780px;height:86px;overflow:hidden">
<div class="t" style="left:6.399999999999977px;top:11.04px;font-size:22.4px;color:#707070;letter-spacing:-1.083px;">User Name</div>
<div class="t" style="left:156.39999999999998px;top:11.04px;font-size:22.4px;color:#707070;letter-spacing:-0.889px;">Last Name</div>
<div class="t" style="left:306.4px;top:11.04px;font-size:22.4px;color:#707070;letter-spacing:-0.657px;">First Name</div>
<div class="t" style="left:456.4000000000001px;top:11.04px;font-size:22.4px;color:#707070;letter-spacing:0.162px;">ID</div>
<div class="t" style="left:606.4000000000001px;top:11.04px;font-size:22.4px;color:#707070;letter-spacing:-0.036px;">Alt ID</div>
<div class="t" style="left:756.4000000000001px;top:11.04px;font-size:22.4px;color:#707070;letter-spacing:-0.500px;">Status</div>
<div class="t" style="left:6.399999999999977px;top:55.04px;font-size:22.4px;color:#353535;letter-spacing:-0.131px;">farmguy123</div>
<div class="t" style="left:156.39999999999998px;top:55.04px;font-size:22.4px;color:#353535;letter-spacing:-0.491px;">Levin</div>
<div class="t" style="left:306.4px;top:55.04px;font-size:22.4px;color:#353535;letter-spacing:-0.249px;">Konstantin</div>
<div class="t" style="left:756.4000000000001px;top:55.04px;font-size:22.4px;color:#353535;letter-spacing:-0.500px;">Internal</div>
</div>
<div class="a" style="left:702px;top:538px;width:782px;height:35px;background:#efefef"></div>
<div class="a" style="left:704px;top:540px;width:32px;height:31px;background:#fff;border:2px solid #a9a9a9;box-sizing:border-box"></div>
<div class="a" style="left:734px;top:540px;width:76px;height:31px;background:#fff;border:2px solid #a9a9a9;box-sizing:border-box"></div>
<svg class="a" style="left:713px;top:548px" width="10" height="15" viewBox="0 0 10 15"><path d="M8 1V14L1 7.5Z" fill="#7a7a7a"/></svg>
<div class="a" style="left:1450px;top:540px;width:32px;height:31px;background:#fff;border:2px solid #a9a9a9;box-sizing:border-box"></div>
<svg class="a" style="left:1462px;top:548px" width="10" height="15" viewBox="0 0 10 15"><path d="M1 1V14L8 7.5Z" fill="#7a7a7a"/></svg>
<div class="t" style="left:698.6px;top:599.34px;font-size:22.4px;color:#353535;letter-spacing:-1.004px;">Username</div>
<div class="a" style="left:808px;top:589px;width:678px;height:39px;background:#fff;border:2px solid #a9a9a9;box-sizing:border-box"></div>
<div class="t" style="left:815.0px;top:599.34px;font-size:22.4px;color:#353535;letter-spacing:-0.187px;">farmguy123</div>
<div class="a" style="left:1276px;top:642.5px;width:210px;height:45px;background:#fefefe;border:2px solid #b0b0b0;box-sizing:border-box"></div>
<div class="t" style="left:978.71px;width:800px;text-align:center;top:655.54px;font-size:22.4px;color:#353535;letter-spacing:-0.987px;">Clone</div>
<svg class="a" style="left:1335px;top:455px" width="90" height="200" viewBox="0 0 90 200"><defs><filter id="sh" x="-50%" y="-20%" width="200%" height="140%"><feGaussianBlur in="SourceAlpha" stdDeviation="4"/><feOffset dx="1" dy="3"/><feComponentTransfer><feFuncA type="linear" slope="0.45"/></feComponentTransfer><feMerge><feMergeNode/><feMergeNode in="SourceGraphic"/></feMerge></filter></defs>
<g filter="url(#sh)"><path d="M45 135V25" stroke="#f0440a" stroke-width="20" stroke-linecap="round"/>
<path d="M15 121L45 136L75 121L45 180Z" fill="#f0440a"/></g></svg></body></html>
